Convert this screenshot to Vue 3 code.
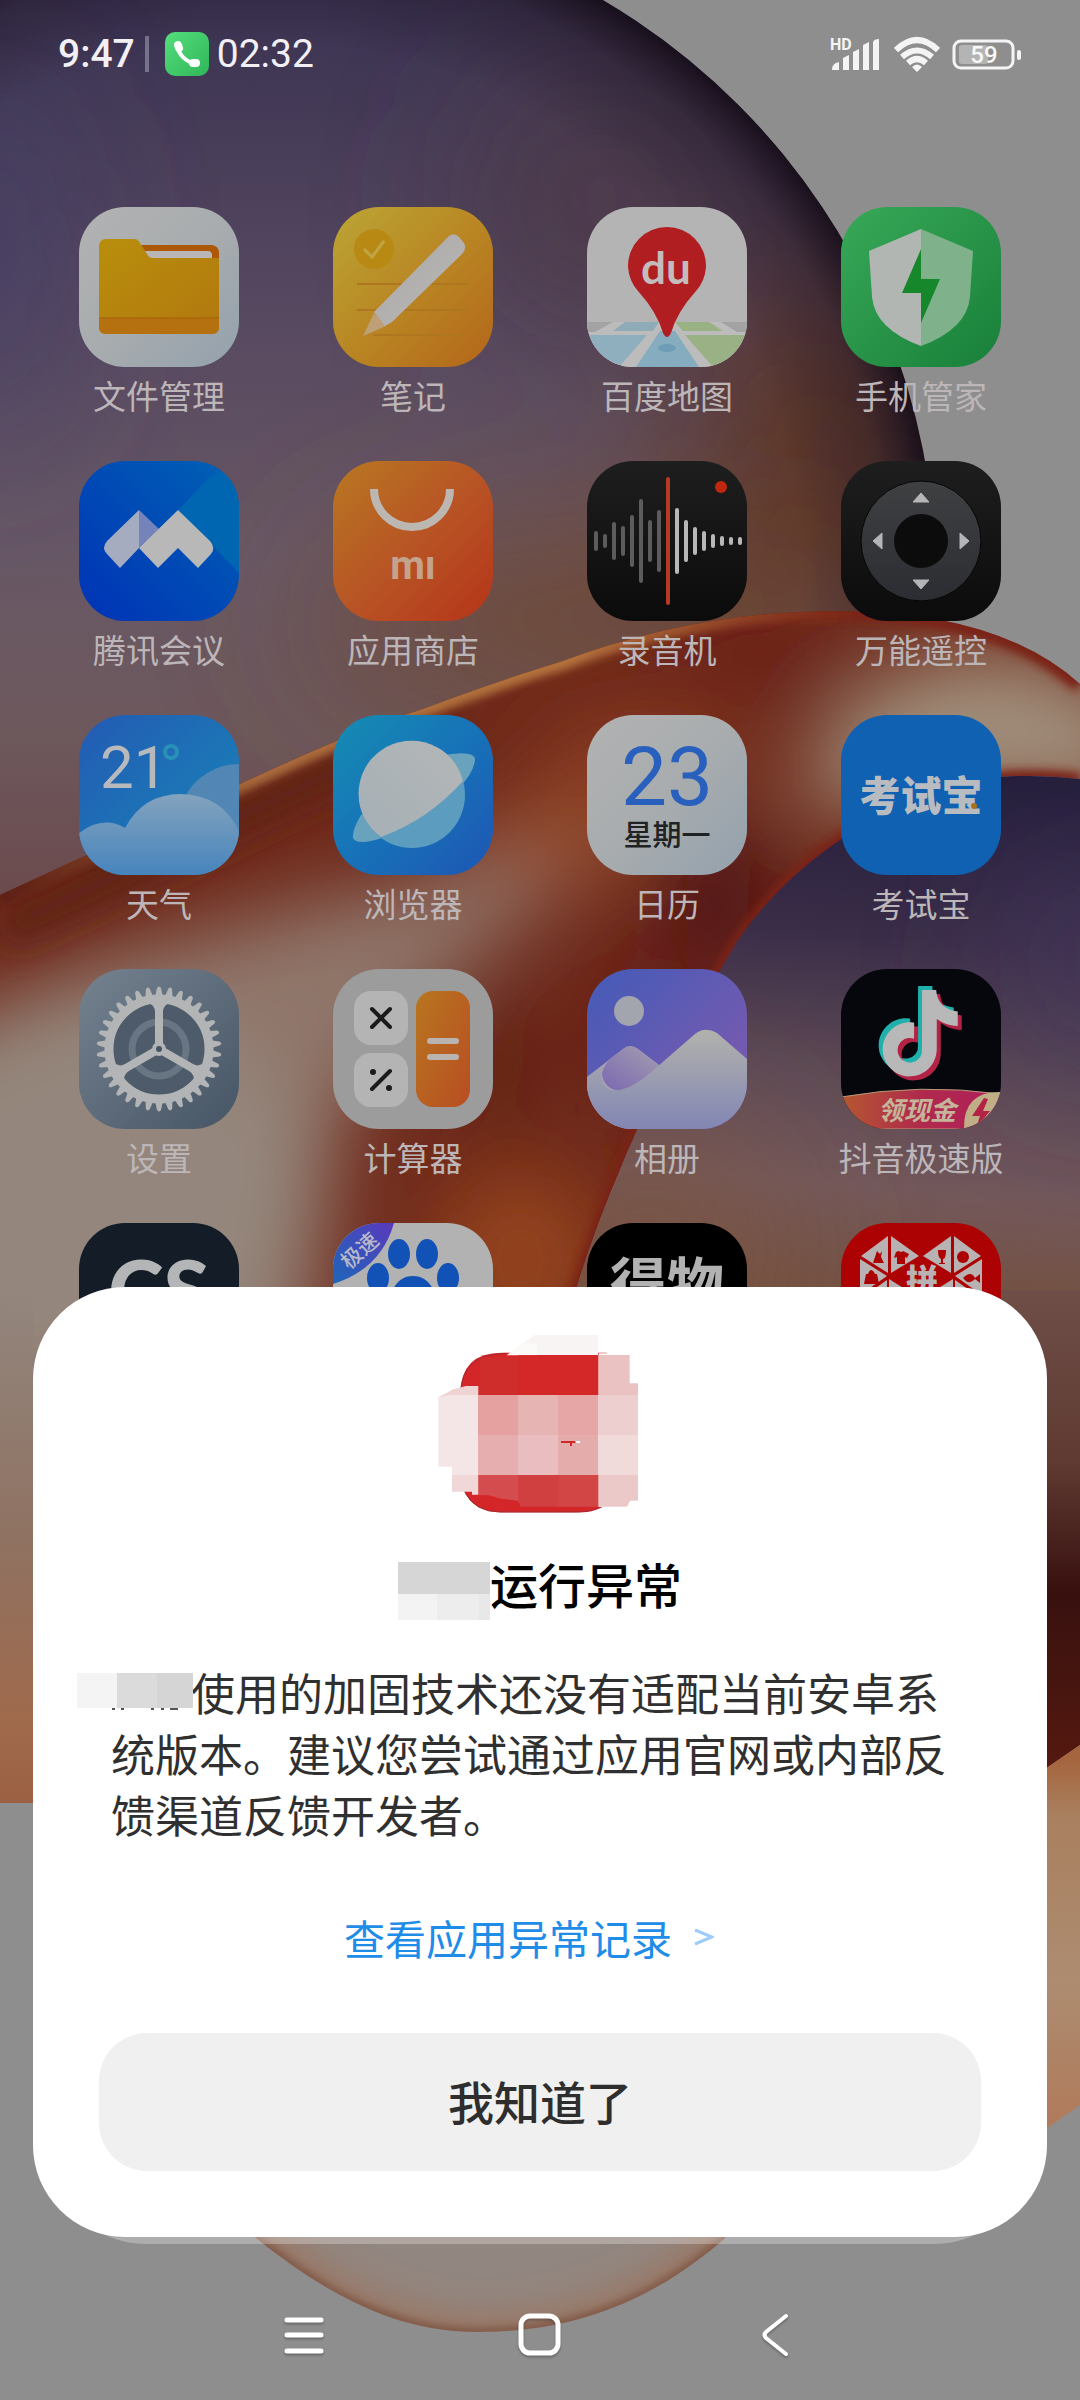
<script setup>
import { ref } from 'vue'

const dialogOpen = ref(true)

// half heights of the recorder bars, left to right
const bars = [10, 7, 19, 15, 26, 42, 21, 31, 64, 33, 21, 14, 10, 7, 5, 4, 4]
const teeth = 34

function barColor(i) {
  if (i === 8) return '#b53a25'
  return i < 8 ? '#5c5c5c' : '#b8b8b8'
}

function closeDialog() {
  dialogOpen.value = false
}
</script>

<template>
  <div class="phone">
    <svg class="wallpaper" viewBox="0 0 1080 2400" preserveAspectRatio="xMidYMid slice" aria-hidden="true">
      <defs>
        <filter id="b3" x="-20%" y="-20%" width="140%" height="140%"><feGaussianBlur stdDeviation="4" /></filter>
        <filter id="b20" x="-50%" y="-50%" width="200%" height="200%"><feGaussianBlur stdDeviation="18" /></filter>
        <filter id="b40" x="-60%" y="-60%" width="220%" height="220%"><feGaussianBlur stdDeviation="40" /></filter>
        <filter id="b80" x="-100%" y="-100%" width="300%" height="300%"><feGaussianBlur stdDeviation="85" /></filter>
        <linearGradient id="ball" gradientUnits="userSpaceOnUse" x1="0" y1="0" x2="0" y2="920">
          <stop offset="0" stop-color="#3a3352" />
          <stop offset=".3" stop-color="#54465f" />
          <stop offset=".6" stop-color="#685866" />
          <stop offset=".8" stop-color="#6d585c" />
          <stop offset="1" stop-color="#6b484b" />
        </linearGradient>
        <radialGradient id="rim" gradientUnits="userSpaceOnUse" cx="261" cy="582" r="675">
          <stop offset=".8" stop-color="#1d1220" stop-opacity="0" />
          <stop offset=".93" stop-color="#1d1220" stop-opacity=".4" />
          <stop offset="1" stop-color="#140b16" stop-opacity=".9" />
        </radialGradient>
        <linearGradient id="edge" gradientUnits="userSpaceOnUse" x1="0" y1="900" x2="900" y2="600">
          <stop offset="0" stop-color="#5a1d12" />
          <stop offset=".3" stop-color="#a86b3c" />
          <stop offset=".65" stop-color="#b4733e" />
          <stop offset=".95" stop-color="#7a2415" />
        </linearGradient>
        <linearGradient id="purple" gradientUnits="userSpaceOnUse" x1="900" y1="780" x2="860" y2="1300">
          <stop offset="0" stop-color="#241d3b" />
          <stop offset=".3" stop-color="#3a2d48" />
          <stop offset=".55" stop-color="#5b4855" />
          <stop offset=".78" stop-color="#73585b" />
          <stop offset="1" stop-color="#74503f" />
        </linearGradient>
        <linearGradient id="leftStrip" gradientUnits="userSpaceOnUse" x1="0" y1="1270" x2="0" y2="1803">
          <stop offset="0" stop-color="#94867c" stop-opacity="0" />
          <stop offset=".1" stop-color="#92837a" />
          <stop offset=".5" stop-color="#8f7262" />
          <stop offset=".85" stop-color="#a06a4c" />
          <stop offset="1" stop-color="#9c6042" />
        </linearGradient>
        <linearGradient id="rightStrip" gradientUnits="userSpaceOnUse" x1="0" y1="1280" x2="0" y2="1800">
          <stop offset="0" stop-color="#6f5049" />
          <stop offset=".35" stop-color="#5f3a32" />
          <stop offset=".6" stop-color="#38110f" />
          <stop offset="1" stop-color="#5a1a10" />
        </linearGradient>
        <linearGradient id="tan" gradientUnits="userSpaceOnUse" x1="0" y1="1760" x2="0" y2="2130">
          <stop offset="0" stop-color="#a5653e" />
          <stop offset=".15" stop-color="#a9805f" />
          <stop offset=".6" stop-color="#ad8c70" />
          <stop offset="1" stop-color="#b07a5a" />
        </linearGradient>
        <clipPath id="ballClip"><circle cx="261" cy="582" r="675" /></clipPath>
        <clipPath id="ribbonClip">
          <path d="M0 895Q120 840 240 784T420 710Q500 680 560 662Q700 610 840 611Q1000 612 1080 684V779Q1040 774 1000 777Q900 790 843 838Q780 880 738 940Q660 1070 620 1170Q590 1240 570 1310L570 2240H0Z" />
        </clipPath>
        <clipPath id="rightClip">
          <path d="M1080 779Q1040 774 1000 777Q900 790 843 838Q780 880 738 940Q660 1070 620 1170Q590 1240 570 1310H1080Z" />
        </clipPath>
        <clipPath id="lobeClip"><path d="M240 2225C330 2300 400 2332 478 2332C590 2332 670 2290 740 2225Z" /></clipPath>
      </defs>

      <rect width="1080" height="2400" fill="#8e8e8e" />

      <g clip-path="url(#ballClip)">
        <rect width="1000" height="1300" fill="url(#ball)" />
        <g filter="url(#b80)">
          <ellipse cx="-20" cy="260" rx="60" ry="180" fill="#433c66" />
          <ellipse cx="640" cy="620" rx="330" ry="90" fill="#6f4630" />
          <ellipse cx="830" cy="440" rx="130" ry="180" fill="#5c3023" />
          <ellipse cx="600" cy="200" rx="120" ry="120" fill="#4c3944" />
        </g>
        <circle cx="261" cy="582" r="675" fill="url(#rim)" />
      </g>

      <g clip-path="url(#ribbonClip)">
        <path d="M0 590H1080V2300H0Z" fill="#6f291a" />
        <g filter="url(#b40)">
          <path d="M-80 1040L100 960L300 905L430 880L540 830L620 800L600 860L470 960L400 1030L340 1120L300 1400L-80 1420Z" fill="#90766a" />
          <ellipse cx="80" cy="1200" rx="240" ry="200" fill="#94867b" />
          <ellipse cx="560" cy="840" rx="90" ry="40" fill="#96502f" />
          <ellipse cx="640" cy="760" rx="100" ry="40" fill="#8c3d22" />
          <ellipse cx="720" cy="900" rx="60" ry="80" fill="#521714" />
          <ellipse cx="640" cy="1030" rx="60" ry="100" fill="#6b2114" />
          <ellipse cx="520" cy="1260" rx="90" ry="90" fill="#93421f" />
          <ellipse cx="500" cy="1070" rx="40" ry="80" fill="#642014" />
          <ellipse cx="760" cy="650" rx="100" ry="30" fill="#6a1e13" />
          <path d="M860 690L960 650L1060 660L1150 720V800H960L840 810L790 790Z" fill="#a08f7c" />
        </g>
        <path d="M0 930Q120 875 240 816T440 732" fill="none" stroke="#5e2013" stroke-width="40" filter="url(#b20)" />
        <path d="M0 895Q120 840 240 784T420 710Q500 680 560 662Q700 610 840 611Q1000 612 1080 684" fill="none" stroke="url(#edge)" stroke-width="18" filter="url(#b3)" />
        <path d="M1080 779Q1040 774 1000 777Q900 790 843 838Q780 880 738 940Q660 1070 620 1170Q590 1240 570 1310" fill="none" stroke="#7a2014" stroke-width="12" filter="url(#b3)" />
        <path d="M0 1270H33V1803H0Z" fill="url(#leftStrip)" />
      </g>
      <path d="M0 1803H570V2240H0Z" fill="#8e8e8e" />

      <g clip-path="url(#rightClip)">
        <rect x="560" y="770" width="520" height="540" fill="url(#purple)" />
        <g filter="url(#b80)">
          <ellipse cx="1110" cy="960" rx="90" ry="90" fill="#493a62" />
          <ellipse cx="650" cy="1250" rx="110" ry="110" fill="#7b5542" />
        </g>
      </g>
      <path d="M1000 1290H1080V1745L1000 1800Z" fill="url(#rightStrip)" />
      <path d="M1000 1800L1080 1745V2105L1047 2128L1000 2160Z" fill="url(#tan)" />

      <g clip-path="url(#lobeClip)">
        <rect x="200" y="2200" width="600" height="160" fill="#928680" />
        <path d="M240 2225C330 2300 400 2332 478 2332C590 2332 670 2290 740 2225" fill="none" stroke="#9c6f56" stroke-width="26" filter="url(#b20)" />
        <path d="M240 2225C330 2300 400 2332 478 2332C590 2332 670 2290 740 2225" fill="none" stroke="#6e3c2a" stroke-width="5" filter="url(#b3)" />
      </g>
    </svg>

    <header class="status">
      <div class="status-left">
        <span class="clock">9:47</span>
        <span class="divider"></span>
        <svg class="call" viewBox="0 0 44 44" aria-hidden="true">
          <defs><linearGradient id="call" x1="0" y1="0" x2="1" y2="1"><stop stop-color="#55de7c" /><stop offset="1" stop-color="#2fb659" /></linearGradient></defs>
          <rect width="44" height="44" rx="10" fill="url(#call)" />
          <g fill="none" stroke="#fff" stroke-linecap="round">
            <path d="M12 14C14 23 21 30 31 32" stroke-width="4" />
            <path d="M13 13L14 16M28 31L31 31" stroke-width="8" />
          </g>
        </svg>
        <span class="duration">02:32</span>
      </div>
      <div class="status-right">
        <svg class="signal" viewBox="0 0 52 40" aria-hidden="true">
          <text x="0" y="16" font-size="16" font-weight="700" font-family="Roboto, sans-serif" fill="#f4f4f4">HD</text>
          <g fill="#f4f4f4">
            <path d="M2 36Q2 29 9 28V36Z" />
            <path d="M13 24L19 21V36H13Z" />
            <path d="M23 18L29 15V36H23Z" />
            <path d="M33 11L39 8V36H33Z" />
            <path d="M43 8Q44 5 49 5V36H43Z" />
          </g>
        </svg>
        <svg class="wifi" viewBox="0 0 46 36" aria-hidden="true">
          <g fill="none" stroke="#f4f4f4" stroke-width="6">
            <path d="M2 14Q23 -6 44 14" />
            <path d="M8 21Q23 8 38 21" />
            <path d="M14 27Q23 19 32 27" />
          </g>
          <path d="M18 31Q23 26 28 31L23 36Z" fill="#f4f4f4" />
        </svg>
        <svg class="battery" viewBox="0 0 70 32" aria-hidden="true">
          <rect x="2" y="3" width="59" height="27" rx="7" fill="none" stroke="#f4f4f4" stroke-width="3" />
          <rect x="7" y="7" width="29" height="19" rx="3" fill="#b4b4b4" />
          <rect x="65" y="12" width="4" height="10" rx="2" fill="#f4f4f4" />
          <text x="32" y="25" text-anchor="middle" font-size="24" font-weight="500" font-family="Roboto, sans-serif" fill="#f8f8f8">59</text>
        </svg>
      </div>
    </header>

    <main class="home">
      <button class="app">
        <svg class="icon" viewBox="0 0 160 160">
          <defs>
            <linearGradient id="f1" x1="0" y1="0" x2="1" y2="1"><stop stop-color="#b2b2b2" /><stop offset=".5" stop-color="#a8acae" /><stop offset="1" stop-color="#93a1ad" /></linearGradient>
            <linearGradient id="f2" x1="0" y1="0" x2="1" y2="1"><stop stop-color="#b88e0c" /><stop offset="1" stop-color="#b2780f" /></linearGradient>
          </defs>
          <rect width="160" height="160" fill="url(#f1)" />
          <path d="M60 38H133Q140 39 140 46V60H60Z" fill="#ac5807" />
          <path d="M64 44H130Q133 45 133 48V54H70Z" fill="#bbb6b6" />
          <path d="M27 32H55Q59 32 61 36L68 47Q70 51 74 51H140V120Q140 127 133 127H27Q20 127 20 120V40Q20 32 27 32Z" fill="url(#f2)" />
          <path d="M20 111H140V120Q140 127 133 127H27Q20 127 20 120Z" fill="#b5700f" />
          <path d="M20 111H140" stroke="#a5600a" stroke-width="1" />
        </svg>
        <span class="label">文件管理</span>
      </button>

      <button class="app">
        <svg class="icon" viewBox="0 0 160 160">
          <defs>
            <linearGradient id="n1" x1="0" y1="0" x2="1" y2="1"><stop stop-color="#bba636" /><stop offset=".5" stop-color="#b98623" /><stop offset="1" stop-color="#b4661a" /></linearGradient>
            <linearGradient id="n2" x1="0" y1="0" x2="1" y2="1"><stop stop-color="#a8a5a5" /><stop offset="1" stop-color="#bdbaba" /></linearGradient>
          </defs>
          <rect width="160" height="160" fill="url(#n1)" />
          <circle cx="41" cy="42" r="20" fill="#b88a14" />
          <path d="M31 42L39 50L51 34" fill="none" stroke="#c0a545" stroke-width="3" />
          <path d="M24 77H135M24 103H136M40 128H128" stroke="#ad761f" stroke-width="2" />
          <path d="M41 106L30 129L53 119Z" fill="#bda078" />
          <path d="M41 105L114 31Q120 24 126 30L131 36Q134 42 129 47L59 115L52 119Z" fill="url(#n2)" />
        </svg>
        <span class="label">笔记</span>
      </button>

      <button class="app">
        <svg class="icon" viewBox="0 0 160 160">
          <rect width="160" height="160" fill="#b4b4b4" />
          <path d="M0 115H160V160H0Z" fill="#bcbcbc" />
          <path d="M0 115H26L8 125H0ZM134 115H160V125H150Z" fill="#a3a3a3" />
          <path d="M38 115H72L66 124H26Z" fill="#8eabb7" />
          <path d="M88 115H122L136 124H96Z" fill="#99b283" />
          <path d="M0 128H60L32 160H0Z" fill="#8fafbf" />
          <path d="M98 128H160V160H126Z" fill="#9ab185" />
          <path d="M73 124H88L112 160H49Z" fill="#85adbf" />
          <ellipse cx="80" cy="141" rx="9" ry="4" fill="#6f9cb6" />
          <path d="M80 20A39 39 0 0 1 119 60Q118 74 109 84Q90 105 84 126Q80 134 76 126Q70 105 51 84Q42 74 41 60A39 39 0 0 1 80 20Z" fill="#b01e22" />
          <text x="79" y="77" text-anchor="middle" font-size="44" font-weight="700" font-family="Lato, sans-serif" fill="#c4bcbc">du</text>
        </svg>
        <span class="label">百度地图</span>
      </button>

      <button class="app">
        <svg class="icon" viewBox="0 0 160 160">
          <defs><linearGradient id="s1" x1="0" y1="0" x2="1" y2="1"><stop stop-color="#38a958" /><stop offset="1" stop-color="#187f39" /></linearGradient></defs>
          <rect width="160" height="160" fill="url(#s1)" />
          <path d="M80 22L28 44L31 90Q34 122 80 139Z" fill="#b2b6b2" />
          <path d="M80 22L132 44L129 90Q126 122 80 139Z" fill="#7fb28a" />
          <path d="M80 42L61 86H80V116L99 72H80Z" fill="#17872c" />
        </svg>
        <span class="label">手机管家</span>
      </button>

      <button class="app">
        <svg class="icon" viewBox="0 0 160 160">
          <defs><linearGradient id="t1" x1="1" y1="0" x2="0" y2="1"><stop stop-color="#0062b4" /><stop offset="1" stop-color="#0032b6" /></linearGradient></defs>
          <rect width="160" height="160" fill="url(#t1)" />
          <path d="M131 16L160 0V112L99 49Z" fill="#0066b2" />
          <path d="M60 49L28 80Q22 87 28 93L41 107L60 87Z" fill="#a6acbf" />
          <path d="M60 49L80 68L60 87Z" fill="#7484bb" />
          <path d="M99 49L131 80Q137 87 132 93L119 107L99 87L79 107L60 87Z" fill="#b8b8b8" />
        </svg>
        <span class="label">腾讯会议</span>
      </button>

      <button class="app">
        <svg class="icon" viewBox="0 0 160 160">
          <defs><linearGradient id="m1" x1="0" y1="0" x2="1" y2="1"><stop stop-color="#b87822" /><stop offset=".5" stop-color="#b85525" /><stop offset="1" stop-color="#b53419" /></linearGradient></defs>
          <rect width="160" height="160" fill="url(#m1)" />
          <path d="M41 28A38 38 0 0 0 117 28" fill="none" stroke="#bdb7b2" stroke-width="8" />
          <text x="80" y="118" text-anchor="middle" font-size="40" font-weight="700" font-family="Roboto, sans-serif" fill="#c5a28c">mı</text>
        </svg>
        <span class="label">应用商店</span>
      </button>

      <button class="app">
        <svg class="icon" viewBox="0 0 160 160">
          <defs><linearGradient id="r1" x1="0" y1="0" x2="0" y2="1"><stop stop-color="#1e1e1e" /><stop offset="1" stop-color="#0b0b0b" /></linearGradient></defs>
          <rect width="160" height="160" fill="url(#r1)" />
          <rect
            v-for="(h, i) in bars"
            :key="i"
            :x="7 + i * 9"
            :y="80 - h"
            width="4"
            :height="h * 2"
            rx="2"
            :fill="barColor(i)"
          />
          <circle cx="134" cy="26" r="6" fill="#c0270f" />
        </svg>
        <span class="label">录音机</span>
      </button>

      <button class="app">
        <svg class="icon" viewBox="0 0 160 160">
          <defs><linearGradient id="y1" x1="0" y1="0" x2="0" y2="1"><stop stop-color="#3e4042" /><stop offset="1" stop-color="#2c2d32" /></linearGradient></defs>
          <rect width="160" height="160" fill="url(#r1)" />
          <circle cx="80" cy="80" r="60" fill="url(#y1)" stroke="#050505" stroke-width="1" />
          <circle cx="80" cy="80" r="27" fill="#0c0c0c" />
          <path d="M80 32L88 41H72ZM80 128L88 119H72ZM32 80L41 72V88ZM128 80L119 72V88Z" fill="#b5b5b8" stroke="#b5b5b8" stroke-linejoin="round" />
        </svg>
        <span class="label">万能遥控</span>
      </button>

      <button class="app">
        <svg class="icon" viewBox="0 0 160 160">
          <defs>
            <linearGradient id="w1" x1="0" y1="0" x2="1" y2="1"><stop stop-color="#235ab4" /><stop offset=".6" stop-color="#1c76b6" /><stop offset="1" stop-color="#2f82b8" /></linearGradient>
            <linearGradient id="w2" x1="0" y1="0" x2="0" y2="1"><stop stop-color="#83a3be" /><stop offset="1" stop-color="#4684bd" /></linearGradient>
          </defs>
          <rect width="160" height="160" fill="url(#w1)" />
          <circle cx="160" cy="110" r="61" fill="#5286b4" />
          <path d="M0 118Q24 100 46 113Q64 79 102 79Q143 80 160 116V160H0Z" fill="url(#w2)" />
          <text x="21" y="73" font-size="60" font-family="Roboto, sans-serif" fill="#b7b9bc">21</text>
          <circle cx="92" cy="37" r="6" fill="none" stroke="#2990b8" stroke-width="4" />
        </svg>
        <span class="label">天气</span>
      </button>

      <button class="app">
        <svg class="icon" viewBox="0 0 160 160">
          <defs>
            <linearGradient id="l1" x1="0" y1="0" x2="1" y2="1"><stop stop-color="#158db3" /><stop offset=".5" stop-color="#1772b8" /><stop offset="1" stop-color="#1e56b4" /></linearGradient>
            <linearGradient id="l2" x1="0" y1="1" x2="1" y2="0"><stop stop-color="#a5b0b6" /><stop offset="1" stop-color="#b4b6b6" /></linearGradient>
          </defs>
          <rect width="160" height="160" fill="url(#l1)" />
          <path d="M112 40Q142 35 142 45Q141 58 124 75Q92 107 55 121Q24 132 20 123Q19 115 28 100Z" fill="#68a2bd" />
          <circle cx="79" cy="80" r="53" fill="#5b9cbf" />
          <path d="M48 122A53 53 0 1 1 130 66Q95 105 48 122Z" fill="url(#l2)" />
        </svg>
        <span class="label">浏览器</span>
      </button>

      <button class="app">
        <svg class="icon" viewBox="0 0 160 160">
          <rect width="160" height="160" fill="url(#f1)" />
          <text x="80" y="90" text-anchor="middle" font-size="82" font-family="Roboto, sans-serif" fill="#2a60bd">23</text>
          <text x="80" y="131" text-anchor="middle" font-size="29" font-weight="500" font-family="'Noto Sans CJK SC', sans-serif" fill="#202224">星期一</text>
        </svg>
        <span class="label">日历</span>
      </button>

      <button class="app">
        <svg class="icon" viewBox="0 0 160 160">
          <rect width="160" height="160" fill="#1061b2" />
          <text x="80" y="96" text-anchor="middle" font-size="41" font-weight="900" font-family="'Noto Sans CJK SC', sans-serif" fill="#b8bcc0">考试宝</text>
          <circle cx="133" cy="91" r="3" fill="#a8701c" />
        </svg>
        <span class="label">考试宝</span>
      </button>

      <button class="app">
        <svg class="icon" viewBox="0 0 160 160">
          <defs><linearGradient id="g1" x1="0" y1="0" x2="1" y2="1"><stop stop-color="#758290" /><stop offset="1" stop-color="#465565" /></linearGradient></defs>
          <rect width="160" height="160" fill="url(#g1)" />
          <circle cx="80" cy="80" r="50" fill="#4e5b6a" />
          <circle cx="80" cy="80" r="27" fill="none" stroke="#687583" stroke-width="7" />
          <circle cx="80" cy="80" r="50" fill="none" stroke="#b2b4b5" stroke-width="9" />
          <path
            v-for="n in teeth"
            :key="n"
            d="M76 28L78 19Q80 16 82 19L84 28Z"
            :transform="`rotate(${(n * 360) / teeth} 80 80)`"
            fill="#b2b4b5"
          />
          <g v-for="a in [0, 120, 240]" :key="a" :transform="`rotate(${a} 80 80)`">
            <path d="M68 33Q76 36 76 43V82H84V43Q84 36 92 33Z" fill="#b2b4b5" />
          </g>
          <circle cx="80" cy="80" r="7" fill="#b2b4b5" />
          <circle cx="80" cy="80" r="3" fill="#465565" />
        </svg>
        <span class="label">设置</span>
      </button>

      <button class="app">
        <svg class="icon" viewBox="0 0 160 160">
          <defs><linearGradient id="c1" x1="0" y1="0" x2="1" y2="1"><stop stop-color="#b87620" /><stop offset="1" stop-color="#b84d22" /></linearGradient></defs>
          <rect width="160" height="160" fill="#9c9c9c" />
          <rect x="21" y="22" width="54" height="54" rx="17" fill="#b4b4b4" />
          <rect x="21" y="84" width="54" height="54" rx="17" fill="#b4b4b4" />
          <rect x="83" y="22" width="54" height="116" rx="17" fill="url(#c1)" />
          <path d="M39 40L57 58M57 40L39 58M57 102L39 120" stroke="#1b1b1b" stroke-width="4" stroke-linecap="round" />
          <circle cx="40" cy="103" r="3" fill="#1b1b1b" />
          <circle cx="56" cy="119" r="3" fill="#1b1b1b" />
          <path d="M97 72H123M97 88H123" stroke="#bab4b0" stroke-width="6" stroke-linecap="round" />
        </svg>
        <span class="label">计算器</span>
      </button>

      <button class="app">
        <svg class="icon" viewBox="0 0 160 160">
          <defs>
            <linearGradient id="a1" x1="0" y1="0" x2="1" y2="1"><stop stop-color="#435bb8" /><stop offset=".7" stop-color="#725ab0" /><stop offset="1" stop-color="#725ab0" /></linearGradient>
            <linearGradient id="a2" x1="0" y1="0" x2="0" y2="1"><stop stop-color="#b2b2ac" /><stop offset="1" stop-color="#8286b4" /></linearGradient>
            <linearGradient id="a3" x1="1" y1="0" x2="0" y2="1"><stop stop-color="#a59fae" /><stop offset="1" stop-color="#7a68b2" /></linearGradient>
          </defs>
          <rect width="160" height="160" fill="url(#a1)" />
          <circle cx="42" cy="42" r="15" fill="#a2a5ae" />
          <path d="M0 108L36 80Q43 74 51 80L80 102V160H0Z" fill="#a4a1b6" />
          <path d="M36 80Q43 75 51 80L76 100Q50 122 34 122Q16 120 15 104Q17 96 24 89Z" fill="url(#a3)" />
          <path d="M0 108L17 96Q10 116 24 121Q42 124 70 98L108 65Q118 57 130 64L160 90V160H0Z" fill="url(#a2)" />
        </svg>
        <span class="label">相册</span>
      </button>

      <button class="app">
        <svg class="icon" viewBox="0 0 160 160">
          <defs>
            <path id="note" d="M12.53.02C13.84 0 15.14.01 16.44 0c.08 1.53.63 3.09 1.75 4.17 1.12 1.11 2.7 1.62 4.24 1.79v4.03c-1.44-.05-2.89-.35-4.2-.97-.57-.26-1.1-.59-1.62-.93-.01 2.92.01 5.84-.02 8.75-.08 1.4-.54 2.79-1.35 3.94-1.31 1.92-3.58 3.17-5.91 3.21-1.43.08-2.86-.31-4.08-1.03-2.02-1.19-3.44-3.37-3.65-5.71-.02-.5-.03-1-.01-1.49.18-1.9 1.12-3.72 2.58-4.96 1.66-1.44 3.98-2.13 6.15-1.72.02 1.48-.04 2.96-.04 4.44-.99-.32-2.15-.23-3.02.37-.63.41-1.11 1.04-1.36 1.75-.21.51-.15 1.07-.14 1.61.24 1.64 1.82 3.02 3.5 2.87 1.12-.01 2.19-.66 2.77-1.61.19-.33.4-.67.41-1.06.1-1.79.06-3.57.07-5.36.01-4.03-.01-8.05.02-12.07z" />
            <linearGradient id="d1" x1="0" y1="0" x2="1" y2="0"><stop stop-color="#b45830" /><stop offset=".5" stop-color="#b02a4c" /><stop offset="1" stop-color="#b01f5c" /></linearGradient>
          </defs>
          <rect width="160" height="160" fill="#05070d" />
          <use href="#note" transform="translate(32 17) scale(3.6)" fill="#1fb0ab" />
          <use href="#note" transform="translate(40 25) scale(3.6)" fill="#b32346" />
          <use href="#note" transform="translate(36 21) scale(3.6)" fill="#b8b8b8" />
          <path d="M0 128Q80 114 160 125V160H0Z" fill="url(#d1)" stroke="#b89a78" />
          <path d="M123 160Q122 122 160 123V160Z" fill="#bfae86" />
          <path d="M143 129L131 147H139L135 159L149 142H142L147 130Z" fill="#b32346" />
          <text x="76" y="151" text-anchor="middle" font-size="26" font-weight="700" font-style="italic" font-family="'Noto Sans CJK SC', sans-serif" fill="#c4b49a">领现金</text>
        </svg>
        <span class="label">抖音极速版</span>
      </button>

      <button class="app" aria-label="CS">
        <svg class="icon" viewBox="0 0 160 160">
          <rect width="160" height="160" fill="#141c27" />
          <text x="80" y="98" text-anchor="middle" font-size="84" font-weight="900" font-family="Lato, sans-serif" fill="#b3b5b6">CS</text>
        </svg>
      </button>

      <button class="app" aria-label="百度极速版">
        <svg class="icon" viewBox="0 0 160 160">
          <defs><linearGradient id="p1" x1="1" y1="0" x2="0" y2="1"><stop stop-color="#5b39bb" /><stop offset=".5" stop-color="#3b50bc" /><stop offset="1" stop-color="#1d66b8" /></linearGradient></defs>
          <rect width="160" height="160" fill="#b2b2b2" />
          <path d="M0 0H61Q48 46 0 61Z" fill="url(#p1)" />
          <text x="27" y="35" text-anchor="middle" font-size="21" font-weight="500" font-family="'Noto Sans CJK SC', sans-serif" fill="#b8b8c8" transform="rotate(-42 27 28)">极速</text>
          <g fill="#1252b6">
            <ellipse cx="66" cy="31" rx="11" ry="15" />
            <ellipse cx="94" cy="31" rx="11" ry="15" />
            <ellipse cx="45" cy="55" rx="11" ry="15" />
            <ellipse cx="115" cy="55" rx="11" ry="15" />
            <path d="M80 53Q93 53 100 66L124 96Q130 128 80 122Q30 128 36 96L60 66Q67 53 80 53Z" />
          </g>
        </svg>
      </button>

      <button class="app" aria-label="得物">
        <svg class="icon" viewBox="0 0 160 160">
          <rect width="160" height="160" fill="#000" />
          <text x="80" y="82" text-anchor="middle" font-size="57" font-weight="700" font-family="'Noto Sans CJK SC', sans-serif" fill="#b2b2b2">得物</text>
        </svg>
      </button>

      <button class="app" aria-label="拼多多">
        <svg class="icon" viewBox="0 0 160 160">
          <rect width="160" height="160" fill="#ad0203" />
          <g fill="#b8b2b2">
            <path d="M47 13V50L20 33ZM50 13L78 33L50 50ZM110 13V50L82 33ZM113 13L140 33L113 50Z" />
            <path d="M19 36L46 53L19 72ZM141 36L114 53L141 72ZM48 56L64 66L48 80ZM112 56L96 66L112 80Z" />
            <path d="M19 76L46 57V90ZM141 76L114 57V90Z" />
          </g>
          <g fill="#ad0203">
            <path d="M36 28L34 34L32 40H43L40 34L41 28L39 31Z" />
            <path d="M55 29L58 28Q60 30 62 28L68 31L66 35L64 34V41H56V34L53 35Z" />
            <path d="M97 27H105Q105 36 102 36V40H104V41H98V40H100V36Q97 35 97 27Z" />
            <circle cx="122" cy="34" r="6" />
            <path d="M25 51H36L38 61H23ZM27 51Q30 43 34 51" />
            <path d="M122 55Q130 47 134 55L139 51V60L134 56Q128 63 122 55Z" />
          </g>
          <text x="81" y="69" text-anchor="middle" font-size="32" font-weight="900" font-family="'Noto Sans CJK SC', sans-serif" fill="#b8b2b2">拼</text>
        </svg>
      </button>
    </main>

    <section v-if="dialogOpen" class="dialog" role="dialog" aria-labelledby="dialog-title">
      <svg class="app-logo" viewBox="180 90 720 570" aria-hidden="true">
        <path d="M301 300V283Q301 158 426 158H740V637H426Q340 637 310 570Z" fill="#d42528" />
        <path d="M303 266Q312 162 438 160M316 577Q345 636 420 636H650Q700 636 728 621" fill="none" stroke="#a02c33" stroke-width="3" />
        <path d="M716 160H800V640H650Q700 637 728 621H716Z" fill="#fff" />
        <path d="M475 165V140L525 105H714V165Z" fill="#f8f4f4" />
        <path d="M440 166L485 130H530V166Z" fill="#fcf9f9" />
        <path d="M362 172H475V285H356Z" fill="#cf2d2c" />
        <path d="M475 166H715V285H475Z" fill="#d32728" />
        <path d="M715 165H809V250H834V285H715Z" fill="#ebc2c2" />
        <path d="M235 292L280 268L318 258H355V285L240 292Z" fill="#efd2d2" />
        <path d="M235 292L268 285H356V526H276V500H235Z" fill="#f4e6e6" />
        <path d="M276 525H356V584H336V575H276Z" fill="#f0d8d8" />
        <g shape-rendering="crispEdges">
          <rect x="355" y="285" width="121" height="121" fill="#e4a1a0" />
          <rect x="475" y="285" width="121" height="121" fill="#e7b4b4" />
          <rect x="595" y="285" width="121" height="121" fill="#e6a6a6" />
          <rect x="715" y="285" width="119" height="121" fill="#edcfcf" />
          <rect x="355" y="405" width="121" height="121" fill="#e6aeae" />
          <rect x="475" y="405" width="121" height="121" fill="#eabec0" />
          <rect x="595" y="405" width="121" height="121" fill="#e5acac" />
          <rect x="715" y="405" width="119" height="121" fill="#f0dada" />
        </g>
        <path d="M355 525H476V603L423 596L387 586H355Z" fill="#d44c4e" />
        <path d="M475 525H596V620H480V610H475Z" fill="#d14040" />
        <path d="M595 525H716V620H595Z" fill="#d24745" />
        <path d="M715 525H834V602H810L801 620H715Z" fill="#ecc9c9" />
        <path d="M603 423H646V429H636V438H630V429H603Z" fill="#d32728" />
        <path d="M646 423H660V429H650Z" fill="#fff" />
      </svg>

      <h1 id="dialog-title" class="title">
        <svg class="title-mask" viewBox="0 0 92 58" aria-hidden="true">
          <rect width="92" height="32" fill="#d6d6d6" />
          <rect y="32" width="39" height="26" fill="#f3f3f3" />
          <rect x="39" y="32" width="42" height="26" fill="#ededed" />
          <rect x="81" y="32" width="11" height="26" fill="#e8e8e8" />
        </svg>
        <span>运行异常</span>
      </h1>

      <p class="message">
        <span class="name-mask">
          <svg viewBox="0 0 116 38" aria-hidden="true">
            <rect width="40" height="35" fill="#f4f4f4" />
            <rect x="40" width="40" height="35" fill="#dbdbdb" />
            <rect x="80" width="36" height="35" fill="#d5d5d5" />
            <path d="M35 36H38M44 36H47M74 36H77M84 36H87M93 36H101" stroke="#555" stroke-width="2" />
          </svg>
        </span>使用的加固技术还没有适配当前安卓系统版本。建议您尝试通过应用官网或内部反馈渠道反馈开发者。
      </p>

      <a class="record-link" href="#">
        <span>查看应用异常记录</span>
        <svg viewBox="0 0 20 18" aria-hidden="true"><path d="M1 2L18 9L1 16" fill="none" stroke="#9fcbfa" stroke-width="3" /></svg>
      </a>

      <button class="confirm" @click="closeDialog">我知道了</button>
    </section>

    <nav class="navbar">
      <button class="nav-btn" aria-label="菜单">
        <svg viewBox="0 0 48 48"><path d="M7 9H41M7 24H41M7 40H41" stroke="#fff" stroke-width="5" stroke-linecap="round" /></svg>
      </button>
      <button class="nav-btn" aria-label="主屏幕">
        <svg viewBox="0 0 48 48"><rect x="5" y="5" width="37" height="37" rx="9" fill="none" stroke="#fff" stroke-width="5" /></svg>
      </button>
      <button class="nav-btn" aria-label="返回">
        <svg viewBox="0 0 48 48"><path d="M34 5L14 21Q11 24 14 27L34 43" fill="none" stroke="#fff" stroke-width="4" stroke-linecap="round" /></svg>
      </button>
    </nav>
  </div>
</template>

<style>
body {
  background: #8e8e8e;
}
</style>

<style scoped>
.phone {
  position: relative;
  isolation: isolate;
  display: flex;
  flex-direction: column;
  min-height: 100vh;
  overflow: hidden;
  font-family: 'Noto Sans CJK SC', sans-serif;
}

button {
  padding: 0;
  border: none;
  background: none;
  font-family: inherit;
  cursor: pointer;
}

.wallpaper {
  position: absolute;
  z-index: -2;
  inset: 0;
  width: 100%;
  height: 100%;
}

.status {
  display: flex;
  align-items: center;
  justify-content: space-between;
  height: 108px;
  padding: 0 58px;
  font-family: Roboto, sans-serif;
  font-size: 39px;
  color: #f3f0f5;
}

.status-left,
.status-right {
  display: flex;
  align-items: center;
}

.clock {
  font-weight: 500;
}

.divider {
  width: 4px;
  height: 36px;
  margin: 0 16px 0 10px;
  background: rgba(255, 255, 255, 0.3);
}

.call {
  width: 44px;
  height: 44px;
  margin-right: 8px;
}

.status-right {
  gap: 12px;
}

.signal {
  width: 52px;
  height: 40px;
}

.wifi {
  width: 46px;
  height: 36px;
}

.battery {
  width: 70px;
  height: 32px;
}

.home {
  display: grid;
  grid-template-columns: repeat(4, 1fr);
  grid-auto-rows: 254px;
  padding: 99px 32px 0;
}

.app {
  display: flex;
  flex-direction: column;
  align-items: center;
}

.icon {
  width: 160px;
  height: 160px;
  border-radius: 46px;
}

.label {
  margin-top: 6px;
  font-size: 33px;
  line-height: 44px;
  white-space: nowrap;
  color: #bcb6b8;
}

.dialog {
  position: absolute;
  left: 33px;
  right: 33px;
  bottom: 163px;
  display: flex;
  flex-direction: column;
  align-items: center;
  padding: 43px 66px 66px;
  border-radius: 92px;
  background: #fff;
}

/* sheet peeking out from under the dialog */
.dialog::after {
  content: '';
  position: absolute;
  z-index: -1;
  left: 20px;
  right: 20px;
  bottom: -7px;
  height: 200px;
  border-radius: 92px;
  background: rgba(255, 255, 255, 0.28);
}

.app-logo {
  width: 240px;
  height: 190px;
}

.title {
  display: flex;
  align-items: flex-start;
  margin: 31px 0 0;
  font-size: 48px;
  font-weight: 500;
  line-height: 64px;
  color: #000;
}

.title-mask {
  width: 92px;
  height: 58px;
  margin-top: 11px;
}

.message {
  align-self: stretch;
  margin: 42px 12px 0;
  font-size: 44px;
  line-height: 61px;
  color: #303030;
}

.name-mask {
  position: relative;
  display: inline-block;
  width: 80px;
  height: 38px;
}

.name-mask svg {
  position: absolute;
  right: -2px;
  bottom: 0;
  width: 116px;
  height: 38px;
}

.record-link {
  display: flex;
  align-items: center;
  gap: 22px;
  margin-top: 62px;
  padding-right: 22px;
  font-size: 41px;
  line-height: 60px;
  color: #1f8ce8;
  text-decoration: none;
}

.record-link svg {
  width: 20px;
  height: 18px;
}

.confirm {
  align-self: stretch;
  height: 138px;
  margin-top: 66px;
  padding-bottom: 4px;
  border-radius: 48px;
  background: #f0f0f0;
  font-size: 46px;
  font-weight: 500;
  color: #2e2e2e;
}

.navbar {
  display: flex;
  align-items: center;
  justify-content: center;
  gap: 188px;
  height: 130px;
  margin-top: auto;
}

.nav-btn {
  width: 48px;
  height: 48px;
  filter: drop-shadow(0 2px 1px rgba(0, 0, 0, 0.25));
}

.nav-btn svg {
  display: block;
  width: 48px;
  height: 48px;
}
</style>
